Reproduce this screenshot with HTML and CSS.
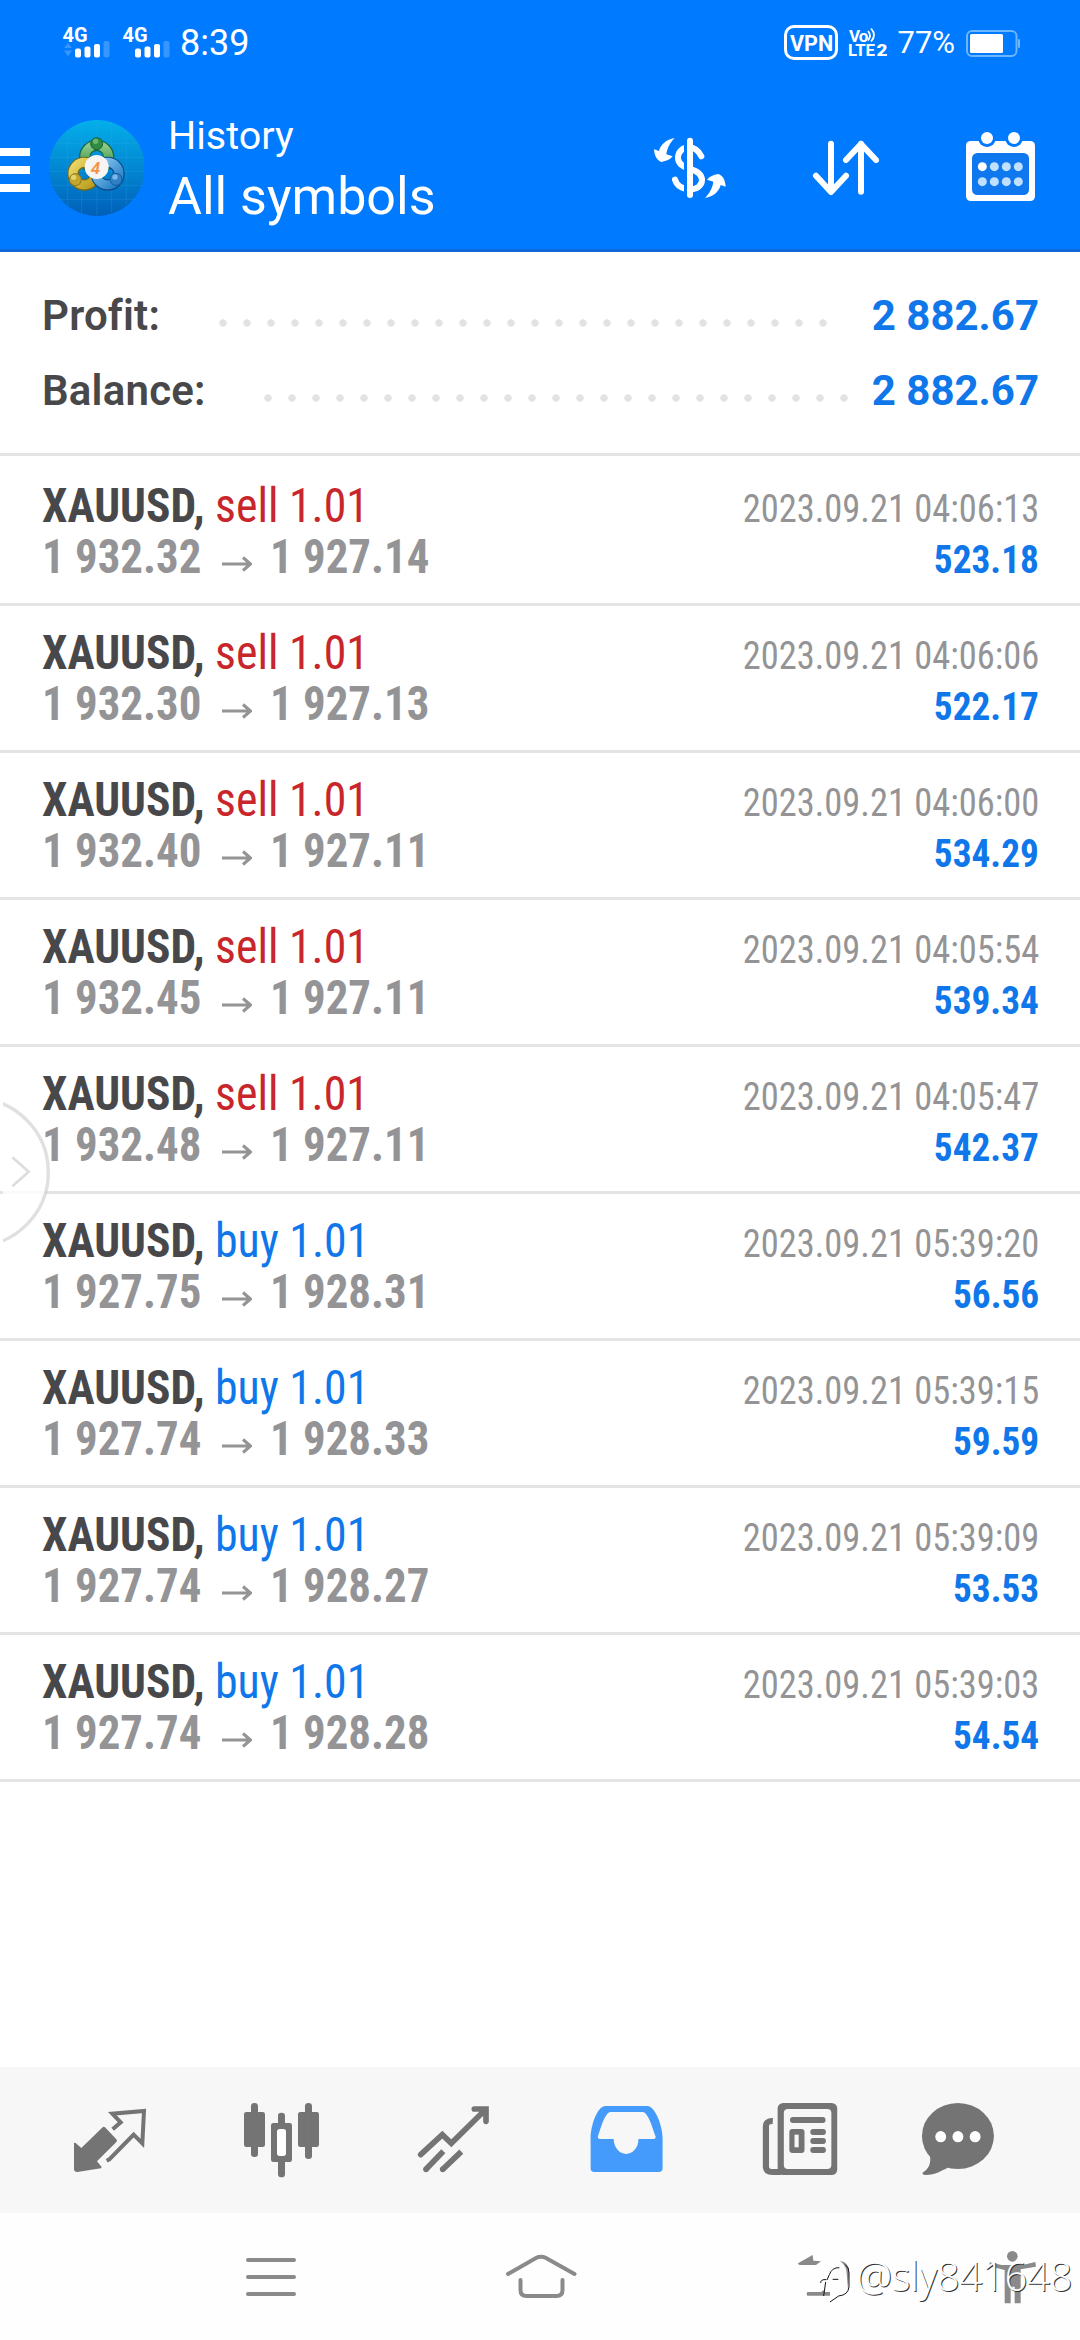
FILE: index.html
```html
<!DOCTYPE html>
<html lang="en">
<head>
<meta charset="utf-8">
<title>History</title>
<link rel="stylesheet" href="styles.css">
</head>
<body>
<div class="app">
  <header class="header">
    <div class="status">
      <svg class="signals" viewBox="60 0 118 84">
        <g fill="#fff">
          <text class="net" x="62.5" y="42">4G</text>
          <text class="net" x="122.5" y="42">4G</text>
          <rect x="75" y="48.5" width="6" height="9" rx="2"/><rect x="84.5" y="46.5" width="6" height="11" rx="2"/><rect x="94" y="44" width="6" height="13.500" rx="2"/>
          <rect x="135" y="48.5" width="6" height="9" rx="2"/><rect x="144.500" y="46.5" width="6" height="11" rx="2"/><rect x="154" y="44" width="6" height="13.500" rx="2"/>
          <g opacity=".22"><rect x="103.500" y="41" width="6" height="16.500" rx="2"/><rect x="163.500" y="41" width="6" height="16.500" rx="2"/><path d="M64 48h8l-4-5zM64 50.500h8l-4 6z"/></g>
        </g>
      </svg>
      <span class="clock">8:39</span>
      <svg class="indicators" viewBox="780 0 245 84">
        <rect x="785.500" y="26.500" width="51" height="32" rx="8.500" fill="none" stroke="#fff" stroke-width="3"/>
        <g fill="#fff">
          <text class="vpn" x="790" y="51">VPN</text>
          <text class="vo" x="849" y="41.500">Vo</text>
          <text class="lte" x="848" y="55.500" textLength="27" lengthAdjust="spacingAndGlyphs">LTE</text>
          <text class="sim" x="876.500" y="55.500" textLength="11" lengthAdjust="spacingAndGlyphs">2</text>
          <text class="pct" x="897.500" y="53">77%</text>
          <rect x="970" y="34" width="33" height="19" rx="1.500"/>
        </g>
        <path d="M868 31q4 4.500 0 9.500M871 28.500q6 6.500 0 13" fill="none" stroke="#fff" stroke-width="1.800"/>
        <rect x="967" y="31" width="49.500" height="25" rx="5" fill="none" stroke="#6cb6ff" stroke-width="2"/>
        <rect x="1018" y="39" width="2" height="9" rx="1" fill="#6cb6ff"/>
      </svg>
    </div>
    <div class="appbar">
      <svg class="menu" viewBox="0 84 48 168"><path d="M0 148h30v8H0zM0 166h30v8H0zM0 184h30v8H0z" fill="#fff"/></svg>
      <svg class="logo" viewBox="48 84 96 168">
        <defs>
          <linearGradient id="disc" x1="0" y1="0" x2="0" y2="1"><stop offset="0" stop-color="#04afea"/><stop offset="1" stop-color="#005fb9"/></linearGradient>
          <linearGradient id="green" x1="0" y1="0" x2="0" y2="1"><stop offset="0" stop-color="#8cc98a"/><stop offset="1" stop-color="#2f8a3a"/></linearGradient>
          <linearGradient id="gold" x1="0" y1="0" x2="1" y2="1"><stop offset="0" stop-color="#ead867"/><stop offset="1" stop-color="#b99a1c"/></linearGradient>
          <linearGradient id="sky" x1="0" y1="0" x2="1" y2="1"><stop offset="0" stop-color="#8dc9f2"/><stop offset="1" stop-color="#1f7cc4"/></linearGradient>
        </defs>
        <g transform="translate(30 100) scale(.33333)">
          <circle cx="201" cy="204" r="144" fill="url(#disc)"/>
          <path d="M113 92V316M155 68V340M201 60V348M245 68V340M289 92V316M78 130H324M60 172H342M60 214H342M64 256H338M88 298H314" stroke="#3fb4ec" stroke-opacity=".3" stroke-width="2"/>
          <g fill="none">
            <circle cx="200" cy="172" r="36" stroke="#17633c" stroke-width="34"/><circle cx="200" cy="172" r="36" stroke="url(#green)" stroke-width="27"/>
            <circle cx="163" cy="221" r="34" stroke="#6f6a1c" stroke-width="34"/><circle cx="163" cy="221" r="34" stroke="url(#gold)" stroke-width="27"/>
            <circle cx="233" cy="221" r="34" stroke="#0b4a86" stroke-width="34"/><circle cx="233" cy="221" r="34" stroke="url(#sky)" stroke-width="27"/>
          </g>
          <circle cx="200" cy="131" r="18" fill="#2f8a42" stroke="#1b6335" stroke-width="3"/>
          <circle cx="197" cy="124" r="8" fill="#86c886" opacity=".7"/>
          <circle cx="136" cy="239" r="18" fill="#c4a52c" stroke="#867419" stroke-width="3"/>
          <circle cx="131" cy="232" r="8" fill="#f2e48c" opacity=".7"/>
          <circle cx="258" cy="238" r="18" fill="#2f7fc4" stroke="#175a9c" stroke-width="3"/>
          <circle cx="255" cy="231" r="8" fill="#a0d2f5" opacity=".7"/>
          <circle cx="200" cy="201" r="36" fill="#f6f5f3"/>
          <text class="four" x="197" y="221" text-anchor="middle">4</text>
        </g>
      </svg>
      <div class="titles"><span class="screen">History</span><span class="filter">All symbols</span></div>
      <svg class="actions" viewBox="640 84 440 168">
        <g transform="translate(640 125) scale(.33333)">
          <path d="M184 94C176 76 160 67 148 67C128 67 114 80 114 98C114 116 128 125 148 131C172 138 186 148 186 165C186 182 170 193 150 193C128 193 110 182 105 164" fill="none" stroke="#fff" stroke-width="18" stroke-linecap="round"/>
          <rect x="132" y="38" width="10" height="181" fill="#007aff"/>
          <rect x="141" y="38" width="18" height="181" rx="9" fill="#fff"/>
          <path id="swap" d="M104 39C78 44 62 58 57 78L42 73C43 92 50 106 64 111C80 108 90 104 98 94L79 88C82 68 90 54 104 39Z" fill="#fff"/>
          <use href="#swap" transform="rotate(180 149.500 129)"/>
          <path d="M573 56V200M528 152L573 201L618 152M663 56V200M618 105L663 57L708 105" fill="none" stroke="#fff" stroke-width="18" stroke-linecap="round" stroke-linejoin="round"/>
          <rect x="978" y="48" width="207" height="180" rx="14" fill="#fff"/>
          <g fill="#007aff"><circle cx="1041" cy="39" r="27"/><circle cx="1122" cy="39" r="27"/></g>
          <rect x="996" y="84" width="171" height="126" rx="16" fill="#0f78ee"/>
          <g fill="#fff"><circle cx="1041" cy="39" r="18"/><circle cx="1122" cy="39" r="18"/><circle cx="1027" cy="125" r="13.500"/></g>
          <g fill="#c0e0ff"><circle cx="1063" cy="125" r="13.500"/><circle cx="1099" cy="125" r="13.500"/><circle cx="1135" cy="125" r="13.500"/><circle cx="1027" cy="170" r="13.500"/><circle cx="1063" cy="170" r="13.500"/><circle cx="1099" cy="170" r="13.500"/><circle cx="1135" cy="170" r="13.500"/></g>
        </g>
      </svg>
    </div>
  </header>

  <section class="summary">
    <div class="total"><span class="label profit-label">Profit:</span><i class="dots dots-profit"></i><b class="amount">2 882.67</b></div>
    <div class="total"><span class="label balance-label">Balance:</span><i class="dots dots-balance"></i><b class="amount">2 882.67</b></div>
  </section>

  <svg class="defs"><symbol id="arrow" viewBox="0 0 30 16"><path d="M0 8H28M21 1.500L28.500 8L21 14.500" fill="none" stroke="#949496" stroke-width="3"/></symbol></svg>

  <main class="deals">
    <article class="deal"><div class="left"><div class="line"><b class="symbol">XAUUSD,</b><span class="side sell">sell 1.01</span></div><div class="line"><b class="price">1 932.32</b><svg class="to"><use href="#arrow"/></svg><b class="price">1 927.14</b></div></div><div class="right"><time>2023.09.21 04:06:13</time><b class="gain">523.18</b></div></article>
    <article class="deal"><div class="left"><div class="line"><b class="symbol">XAUUSD,</b><span class="side sell">sell 1.01</span></div><div class="line"><b class="price">1 932.30</b><svg class="to"><use href="#arrow"/></svg><b class="price">1 927.13</b></div></div><div class="right"><time>2023.09.21 04:06:06</time><b class="gain">522.17</b></div></article>
    <article class="deal"><div class="left"><div class="line"><b class="symbol">XAUUSD,</b><span class="side sell">sell 1.01</span></div><div class="line"><b class="price">1 932.40</b><svg class="to"><use href="#arrow"/></svg><b class="price">1 927.11</b></div></div><div class="right"><time>2023.09.21 04:06:00</time><b class="gain">534.29</b></div></article>
    <article class="deal"><div class="left"><div class="line"><b class="symbol">XAUUSD,</b><span class="side sell">sell 1.01</span></div><div class="line"><b class="price">1 932.45</b><svg class="to"><use href="#arrow"/></svg><b class="price">1 927.11</b></div></div><div class="right"><time>2023.09.21 04:05:54</time><b class="gain">539.34</b></div></article>
    <article class="deal"><div class="left"><div class="line"><b class="symbol">XAUUSD,</b><span class="side sell">sell 1.01</span></div><div class="line"><b class="price">1 932.48</b><svg class="to"><use href="#arrow"/></svg><b class="price">1 927.11</b></div></div><div class="right"><time>2023.09.21 04:05:47</time><b class="gain">542.37</b></div></article>
    <article class="deal"><div class="left"><div class="line"><b class="symbol">XAUUSD,</b><span class="side buy">buy 1.01</span></div><div class="line"><b class="price">1 927.75</b><svg class="to"><use href="#arrow"/></svg><b class="price">1 928.31</b></div></div><div class="right"><time>2023.09.21 05:39:20</time><b class="gain">56.56</b></div></article>
    <article class="deal"><div class="left"><div class="line"><b class="symbol">XAUUSD,</b><span class="side buy">buy 1.01</span></div><div class="line"><b class="price">1 927.74</b><svg class="to"><use href="#arrow"/></svg><b class="price">1 928.33</b></div></div><div class="right"><time>2023.09.21 05:39:15</time><b class="gain">59.59</b></div></article>
    <article class="deal"><div class="left"><div class="line"><b class="symbol">XAUUSD,</b><span class="side buy">buy 1.01</span></div><div class="line"><b class="price">1 927.74</b><svg class="to"><use href="#arrow"/></svg><b class="price">1 928.27</b></div></div><div class="right"><time>2023.09.21 05:39:09</time><b class="gain">53.53</b></div></article>
    <article class="deal"><div class="left"><div class="line"><b class="symbol">XAUUSD,</b><span class="side buy">buy 1.01</span></div><div class="line"><b class="price">1 927.74</b><svg class="to"><use href="#arrow"/></svg><b class="price">1 928.28</b></div></div><div class="right"><time>2023.09.21 05:39:03</time><b class="gain">54.54</b></div></article>
  </main>

  <nav class="tabs">
    <svg class="tab" viewBox="0 2067 180 146"><g transform="translate(50 2090) scale(.33333)"><path d="M158 112Q161 109 165 112L199 148Q203 152 199 156L141 214L155 231L153 235L82 246Q72 246 72 237V159L76 158L94 174Z"/><path d="M188 118L212 97L187 71L282 63L277 160L251 134L178 208L170 212" fill="none" stroke="#747474" stroke-width="12"/></g></svg>
    <svg class="tab" viewBox="180 2067 180 146"><g transform="translate(50 2090) scale(.33333)"><rect x="582" y="66" width="63" height="105" rx="7"/><rect x="603" y="39" width="21" height="162" rx="10"/><rect x="663" y="99" width="63" height="117" rx="7"/><rect x="684" y="68" width="21" height="194" rx="10"/><rect x="681" y="117" width="27" height="81" rx="8" fill="#fff"/><rect x="744" y="66" width="63" height="105" rx="7"/><rect x="765" y="39" width="21" height="168" rx="10"/></g></svg>
    <svg class="tab" viewBox="360 2067 180 146"><g transform="translate(50 2090) scale(.33333)" fill="none" stroke="#747474" stroke-width="17"><path d="M1112 194L1177 134L1204 160L1306 59M1273 57H1308V94" stroke-linecap="round"/><path d="M1180 184L1128 238M1234 185L1178 238"/><g fill="#747474" stroke="none"><circle cx="1128" cy="238" r="8.500"/><circle cx="1178" cy="238" r="8.500"/></g></g></svg>
    <svg class="tab active" viewBox="540 2067 180 146"><g transform="translate(540 2050) scale(.3444 .33333)"><path fill-rule="evenodd" d="M147 355V265C147 230 165 168 190 168H312C335 168 356 230 356 265V355Q356 366 345 366H158Q147 366 147 355ZM168 260C175 240 188 186 205 186H298C315 186 328 240 336 260Q336 267 330 267H286A36 45 0 0 1 214 267H174Q168 267 168 260Z"/></g></svg>
    <svg class="tab" viewBox="720 2067 180 146"><g transform="translate(540 2050) scale(.3444 .33333)"><path d="M676 213Q656 212 656 230V350Q656 366 676 366H700" fill="none" stroke="#747474" stroke-width="18"/><rect x="690" y="159" width="173" height="216" rx="16"/><rect x="708" y="177" width="138" height="180" rx="12" fill="#f7f7f7"/><rect x="726" y="201" width="103" height="18" rx="8"/><rect x="724" y="237" width="44" height="72" rx="9"/><rect x="739" y="254" width="12" height="38" fill="#f7f7f7"/><rect x="785" y="237" width="45" height="18" rx="8"/><rect x="785" y="264" width="45" height="18" rx="8"/><rect x="785" y="291" width="45" height="18" rx="8"/></g></svg>
    <svg class="tab" viewBox="900 2067 180 146"><g transform="translate(540 2050) scale(.3444 .33333)"><ellipse cx="1213.500" cy="258" rx="104.500" ry="99"/><path d="M1130 310C1140 340 1126 360 1110 369Q1112 376 1120 375C1148 374 1166 362 1184 353L1205 330Z"/><g fill="#fff"><ellipse cx="1163.500" cy="260" rx="15.800" ry="17"/><ellipse cx="1213.500" cy="260" rx="15.800" ry="17"/><ellipse cx="1263.500" cy="260" rx="15.800" ry="17"/></g></g></svg>
  </nav>

  <footer class="system">
    <svg class="keys" viewBox="0 2213 1080 127">
      <path d="M248 2260H294M248 2277H294M248 2294H294M508 2274L536 2258Q541 2255.500 546 2258L574.500 2274M520.500 2280V2290Q520.500 2296 526.500 2296H556.500Q562.500 2296 562.500 2290V2280" fill="none" stroke="#8a8a8a" stroke-width="4" stroke-linecap="round"/>
      <g transform="translate(780 2240) scale(.33333)" fill="#8a8a8a">
        <path d="M54 70L98 45L100 62L123 64L108 75H60Q54 75 54 70ZM82 156H124L130 150L133 156H150V167H82Q78 162 82 156ZM180 63Q207 66 207 96L204 148L200 100Q200 78 180 63Z"/>
        <circle cx="697" cy="49" r="16"/>
        <path d="M629 67L665 75H728L766 66L768 80L722 88V190H704V140H692V190H674V90L629 79Z"/>
        <path d="M196 74Q207 82 207 98V140Q205 165 176 168L150 186M178 83Q156 82 148 104L141 120M137 126L131 168M122 129Q122 117 139 119M158 118H175" fill="none" stroke="#111" stroke-width="3"/>
      </g>
    </svg>
  </footer>

  <svg class="edge" viewBox="10 100 150 480"><circle cx="-76" cy="338" r="222" fill="#fff" fill-opacity=".82" stroke="#ccc" stroke-opacity=".6" stroke-width="10"/><path d="M38 293L87 336L38 380" fill="none" stroke="#ddd" stroke-width="8"/></svg>
  <span class="watermark">@sly841648</span>
</div>
</body>
</html>
```
FILE: styles.css
```css
* { box-sizing: border-box; }

body {
  margin: 0;
  background: #fff;
  font-family: Roboto, "Liberation Sans", sans-serif;
}

.app {
  position: relative;
  display: flex;
  flex-direction: column;
  width: 1080px;
  height: 2340px;
  overflow: hidden;
}

svg { display: block; flex: none; }
.defs { display: none; }

/* header */
.header {
  height: 252px;
  color: #fff;
  background: #007aff;
  box-shadow: inset 0 -3px #1268da;
}

.status { display: flex; height: 84px; padding: 0 55px 0 60px; }
.signals { width: 118px; height: 84px; }
.clock {
  margin-left: 2px;
  padding-top: 22px;
  font-size: 36px;
  font-weight: 450;
  line-height: 43px;
}
.indicators { width: 245px; height: 84px; margin-left: auto; }
.net { font-size: 20px; font-weight: 700; }
.vpn { font-size: 21.5px; font-weight: 700; }
.vo { font-size: 17px; font-weight: 700; letter-spacing: -1px; }
.lte { font-size: 16px; font-weight: 700; }
.sim { font-size: 16.5px; font-weight: 900; }
.pct { font-size: 31px; }
.four { font-size: 52px; font-style: italic; font-weight: 600; fill: #f5924a; }

.appbar { display: flex; height: 168px; }
.menu { width: 48px; height: 168px; }
.logo { width: 96px; height: 168px; }
.titles {
  display: flex;
  flex-direction: column;
  padding: 27px 0 0 24px;
  white-space: nowrap;
}
.screen { font-size: 39.5px; line-height: 50px; }
.filter { font-size: 52px; line-height: 72px; }
.actions { width: 440px; height: 168px; margin-left: auto; }

/* totals */
.summary {
  height: 204px;
  padding: 26px 41px 0 42px;
  border-bottom: 3px solid #e4e4e4;
}
.total { display: flex; height: 75px; font-size: 42px; line-height: 75px; }
.label { color: #48484b; font-weight: 600; letter-spacing: .2px; }
.profit-label { width: 169px; }
.balance-label { width: 214px; }
.dots {
  height: 24px;
  margin-top: 33px;
  background: radial-gradient(circle, #e2e2e2 3.300px, transparent 4.100px) 0 0 / 24px 24px;
}
.dots-profit { width: 624px; }
.dots-balance { width: 600px; }
.amount { margin-left: auto; color: #0f77ea; font-weight: 700; }

/* deals */
.deals { padding-top: 3px; font-family: "Roboto Condensed", Roboto, sans-serif; }
.deal {
  display: flex;
  justify-content: space-between;
  height: 147px;
  padding: 22px 41px 0 42px;
  border-bottom: 3px solid #e4e4e4;
}
.line { display: flex; height: 51px; font-size: 47.500px; line-height: 51px; }
.symbol { color: #48484b; transform: scaleX(.956); transform-origin: left; }
.side { margin-left: 3px; transform: scaleX(.965); transform-origin: left; }
.sell { color: #c8262b; }
.buy { color: #0f77ea; }
.price { width: 169px; color: #949496; transform: scaleX(.944); transform-origin: left; }
.to { width: 30px; height: 16px; margin: 24px 18px 0 11px; }
.right {
  display: flex;
  flex-direction: column;
  align-items: flex-end;
  padding-top: 2px;
  font-size: 39.500px;
  line-height: 51px;
}
time { color: #949496; transform: scaleX(.923); transform-origin: right; }
.gain { margin-top: 1px; color: #0f77ea; font-size: 39px; transform: scaleX(.956); transform-origin: right; }

/* bottom tabs and system keys */
.tabs {
  display: flex;
  height: 146px;
  margin-top: auto;
  background: #f7f7f7;
}
.tab { width: 180px; height: 146px; fill: #747474; }
.active { fill: #449bfb; }
.system { height: 127px; background: #fefefe; }
.keys { width: 1080px; height: 127px; }

/* overlays */
.edge { position: absolute; left: 3px; top: 1093px; width: 50px; height: 160px; }
.watermark {
  position: absolute;
  right: 8px;
  bottom: 38px;
  color: #fff;
  font: 300 40px/52px "Open Sans", "Noto Sans", sans-serif;
  letter-spacing: -.300px;
  text-shadow: 1px 1px 0 #333;
}
```
